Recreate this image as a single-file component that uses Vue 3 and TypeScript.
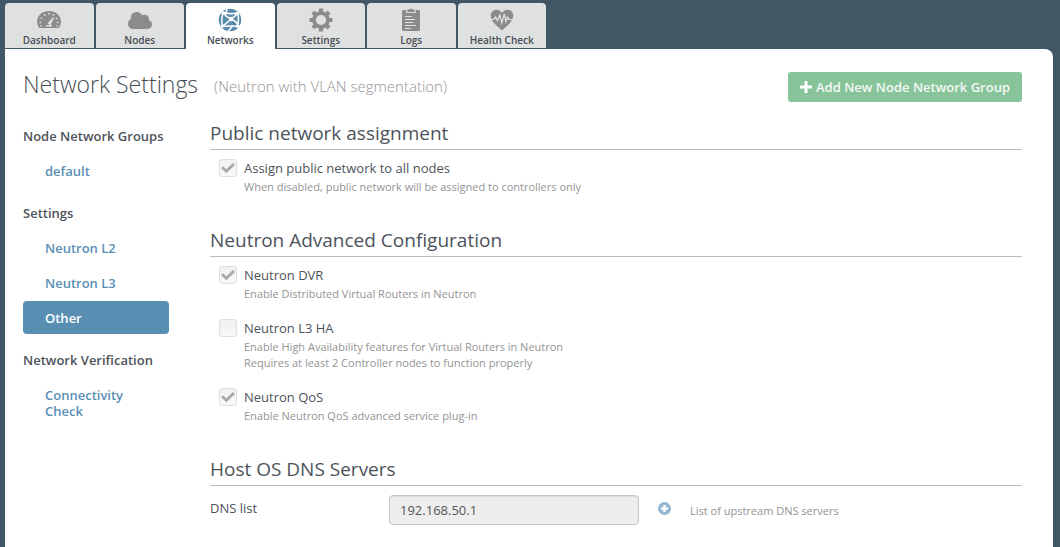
<script setup lang="ts">
import { ref } from 'vue'

interface Tab { id: string; label: string }
interface NavGroup { title: string; items: string[] }
interface Option { id: string; label: string; help: string[]; checked: boolean }
interface Section { title: string; options: Option[] }

const tabs: Tab[] = [
  { id: 'dashboard', label: 'Dashboard' },
  { id: 'nodes', label: 'Nodes' },
  { id: 'networks', label: 'Networks' },
  { id: 'settings', label: 'Settings' },
  { id: 'logs', label: 'Logs' },
  { id: 'health', label: 'Health Check' },
]
const activeTab = 'networks'

const navGroups: NavGroup[] = [
  { title: 'Node Network Groups', items: ['default'] },
  { title: 'Settings', items: ['Neutron L2', 'Neutron L3', 'Other'] },
  { title: 'Network Verification', items: ['Connectivity Check'] },
]
const activeItem = ref('Other')

const sections: Section[] = [
  {
    title: 'Public network assignment',
    options: [
      {
        id: 'assign-public',
        label: 'Assign public network to all nodes',
        help: ['When disabled, public network will be assigned to controllers only'],
        checked: true,
      },
    ],
  },
  {
    title: 'Neutron Advanced Configuration',
    options: [
      { id: 'dvr', label: 'Neutron DVR', help: ['Enable Distributed Virtual Routers in Neutron'], checked: true },
      {
        id: 'l3ha',
        label: 'Neutron L3 HA',
        help: [
          'Enable High Availability features for Virtual Routers in Neutron',
          'Requires at least 2 Controller nodes to function properly',
        ],
        checked: false,
      },
      { id: 'qos', label: 'Neutron QoS', help: ['Enable Neutron QoS advanced service plug-in'], checked: true },
    ],
  },
]
const dns = ref('192.168.50.1')
</script>

<template>
  <div class="page">
    <nav class="tabs">
      <a v-for="tab in tabs" :key="tab.id" href="#" class="tab" :class="{ active: tab.id === activeTab }">
        <svg v-if="tab.id === 'dashboard'" class="tab-icon" viewBox="0 0 24 24">
          <path class="fill" d="M2.2 20A12 11.6 0 0 1 0 14C0 7.600 5.4 3 12 3s12 4.600 12 11a12 11.600 0 0 1-2.200 6z" />
          <g class="cut">
            <circle cx="3.300" cy="14.400" r=".9" /><circle cx="4.500" cy="10.300" r=".9" />
            <circle cx="7.600" cy="7" r=".9" /><circle cx="12" cy="5.700" r=".9" />
            <circle cx="16.400" cy="7" r=".9" /><circle cx="19.500" cy="10.300" r=".9" />
            <circle cx="20.700" cy="14.400" r=".9" /><circle cx="3.900" cy="17.900" r=".8" /><circle cx="20.100" cy="17.900" r=".8" />
            <path d="M16.300 9l.9.600-3.700 7.600-3.200-1.800zM9 17h6v1.500H9z" />
          </g>
        </svg>
        <svg v-else-if="tab.id === 'nodes'" class="tab-icon" viewBox="0 0 24 24">
          <path class="fill" d="M5.500 21C2.200 21 0 18.900 0 16c0-2.400 1.200-4.100 3-4.900C1.900 6.900 5 4 8.600 4c2.600 0 4.600 1.300 5.400 3.300 3.800-1.900 7.700.5 7 4.900 1.900.7 3 2.200 3 4.200 0 2.700-2 4.600-4.800 4.600z" />
        </svg>
        <svg v-else-if="tab.id === 'networks'" class="tab-icon" viewBox="0 0 24 24">
          <circle class="fill" cx="12" cy="12" r="11.200" />
          <g class="wire">
            <path d="M5 4.500Q8 9 13 11T21.500 18.500M13 11Q17 9 19.500 5M13 11Q8 16 4 18.500M5 4.500Q12 6.500 19.500 5M5 4.500Q3 11 4 18.500M4 18.500Q12 17.500 21.500 18.500M19.500 5Q21.500 11 19.500 18M15 17.500L10 23.500M9 1L8 5" />
          </g>
          <g class="cut"><circle cx="13" cy="11" r="2.200" /><circle cx="5" cy="5" r="1.700" /><circle cx="19" cy="5.500" r="1.700" /><circle cx="4.500" cy="18" r="1.600" /><circle cx="19.500" cy="18" r="1.700" /></g>
        </svg>
        <svg v-else-if="tab.id === 'settings'" class="tab-icon" viewBox="0 0 24 24">
          <path class="fill" fill-rule="evenodd" d="M9.900 3.400V.6h4.200v2.800l2.500 1L18.500 2.500l3 3-1.900 1.900 1 2.500h2.800v4.200h-2.800l-1 2.500 1.900 1.900-3 3-1.900-1.900-2.500 1v2.800H9.900v-2.800l-2.500-1-1.900 1.900-3-3 1.900-1.900-1-2.500H.6V9.900h2.800l1-2.500-1.900-1.900 3-3 1.900 1.900zM12 6.900a5.100 5.100 0 1 0 0 10.200 5.100 5.100 0 0 0 0-10.200z" />
        </svg>
        <svg v-else-if="tab.id === 'logs'" class="tab-icon" viewBox="0 0 24 24">
          <path class="fill" d="M4.500 2h2.700v3h9.600V2h2.700a1.500 1.500 0 0 1 1.500 1.500v18a1.500 1.500 0 0 1-1.500 1.500h-15A1.500 1.500 0 0 1 3 21.500v-18A1.500 1.500 0 0 1 4.500 2zM8.300 1.600h1.900a1.900 1.300 0 0 1 3.600 0h1.900V4H8.300z" />
          <path class="cut" d="M6 8h7v1H6zM6 11h10v1H6zM6 14h8v1H6zM6 17h11v1H6zM6 20h6v1H6z" />
        </svg>
        <svg v-else class="tab-icon" viewBox="0 0 24 24">
          <path class="fill" d="M12 22.500C7.500 18 .8 14 .8 7.800.8 4.200 3.300 1.800 6.500 1.800c2.500 0 4.500 1.400 5.500 3.500 1-2.100 3-3.500 5.500-3.500 3.200 0 5.700 2.400 5.700 6C23.200 14 16.500 18 12 22.500z" />
          <path class="pulse" d="M.5 11.500h3.200L5.500 9l2 3.800L9.700 7l2.200 8 2.300-9 1.700 7.500L17.500 9l1.400 2.500h4.600" />
        </svg>
        <span>{{ tab.label }}</span>
      </a>
    </nav>

    <main class="panel">
      <header class="head">
        <h1>Network Settings</h1>
        <span class="subtitle">(Neutron with VLAN segmentation)</span>
        <button type="button" class="add" disabled>
          <svg viewBox="0 0 12 12"><path d="M4.500 0h3v4.500H12v3H7.500V12h-3V7.500H0v-3h4.500z" /></svg>
          Add New Node Network Group
        </button>
      </header>

      <div class="columns">
        <aside class="side">
          <section v-for="group in navGroups" :key="group.title" class="group">
            <h2>{{ group.title }}</h2>
            <ul>
              <li v-for="item in group.items" :key="item">
                <a href="#" :class="{ current: item === activeItem }" @click.prevent="activeItem = item">{{ item }}</a>
              </li>
            </ul>
          </section>
        </aside>

        <div class="content">
          <section v-for="section in sections" :key="section.title" class="section">
            <h3>{{ section.title }}</h3>
            <div v-for="option in section.options" :key="option.id" class="option">
              <input :id="option.id" v-model="option.checked" type="checkbox" disabled />
              <div>
                <label :for="option.id">{{ option.label }}</label>
                <p v-for="line in option.help" :key="line">{{ line }}</p>
              </div>
            </div>
          </section>

          <section class="section">
            <h3>Host OS DNS Servers</h3>
            <div class="dns">
              <label for="dns">DNS list</label>
              <input id="dns" v-model="dns" type="text" disabled />
              <button type="button" aria-label="Add DNS server" disabled>
                <svg viewBox="0 0 13 13"><circle cx="6.500" cy="6.500" r="6.500" /><path d="M5.300 3h2.400v2.300H10v2.400H7.700V10H5.300V7.700H3V5.300h2.300z" /></svg>
              </button>
              <p>List of upstream DNS servers</p>
            </div>
          </section>
        </div>
      </div>
    </main>
  </div>
</template>

<style>
body {
  margin: 0;
  background: #415766;
}
</style>

<style scoped>
.page {
  display: flex;
  flex-direction: column;
  box-sizing: border-box;
  height: 100vh;
  overflow: hidden;
  padding: 3px 7px 0 5px;
  background: #415766;
  color: #4d535b;
  font-family: "Open Sans", sans-serif;
  font-size: 13px;
}
h1, h2, h3, p, ul { margin: 0; padding: 0; }
ul { list-style: none; }
a { text-decoration: none; }

.tabs {
  display: flex;
  flex: none;
  gap: 2px;
  width: 541px;
  height: 46px;
}
.tab {
  display: flex;
  flex: 1 1 0;
  flex-direction: column;
  align-items: center;
  box-sizing: border-box;
  height: 45px;
  padding-top: 5px;
  border-radius: 4px 4px 0 0;
  background: #dfe1e0;
  color: #474d55;
  font-size: 10px;
  font-weight: 600;
  line-height: 16px;
}
.tab.active { height: 46px; background: #fff; }
.tab-icon { width: 24px; height: 24px; }
.fill { fill: #8b8b8b; }
.cut { fill: #dfe1e0; }
.pulse { fill: none; stroke: #dfe1e0; stroke-width: 1.2; }
.wire { fill: none; stroke: #fff; stroke-width: 1.5; }
.active .fill { fill: #5a8bab; }
.active .cut { fill: #fff; }

.panel {
  flex: 1 0 auto;
  padding: 0 31px 20px 18px;
  border-radius: 0 8px 0 0;
  background: #fff;
}
.head {
  display: flex;
  align-items: center;
  height: 71px;
}
h1 {
  padding-bottom: 2px;
  color: #474d55;
  font-size: 23px;
  font-weight: 300;
  line-height: 32px;
}
.subtitle {
  margin-left: 16px;
  padding-top: 3px;
  color: #949494;
  font-size: 15px;
  font-weight: 300;
}
.add {
  display: flex;
  align-items: center;
  gap: 4px;
  height: 30px;
  margin-top: 4px;
  margin-left: auto;
  padding: 0 12px;
  border: 0;
  border-radius: 3px;
  background: #88c49a;
  color: #f3f9f5;
  font: 600 13px "Open Sans", sans-serif;
}
.add svg { width: 12px; height: 12px; fill: #fff; }

.columns { display: flex; }
.side { width: 146px; margin: 6px 41px 0 0; flex: none; }
.group { margin-bottom: 16px; }
.group h2 {
  margin-bottom: 7px;
  font-size: 13px;
  font-weight: 600;
  line-height: 21px;
  white-space: nowrap;
}
.group ul { display: flex; flex-direction: column; gap: 2px; }
.group a {
  display: block;
  padding: 9px 22px 8px;
  border-radius: 4px;
  color: #5a8fb4;
  font-weight: 600;
  line-height: 16px;
}
.group a.current { background: #5a8fb4; color: #fff; }

.content { flex: 1; min-width: 0; }
.section { margin-bottom: 32px; }
h3 {
  margin-bottom: 8px;
  padding-bottom: 3px;
  border-bottom: 1px solid #bababa;
  font-size: 19px;
  font-weight: 400;
  line-height: 26px;
}
.option {
  display: flex;
  gap: 7px;
  padding-left: 9px;
}
.option + .option { margin-top: 16px; }
.option label { display: block; line-height: 21px; }
p { color: #949494; font-size: 11px; line-height: 16px; }
.option input {
  display: grid;
  place-items: center;
  flex: none;
  box-sizing: border-box;
  width: 18px;
  height: 18px;
  margin: 1px 0 0;
  border: 1px solid #dedede;
  border-radius: 3px;
  background: linear-gradient(#f1f1f1, #f8f8f8);
  appearance: none;
}
.option input:checked::before {
  width: 14px;
  height: 12px;
  background: #aaa;
  clip-path: polygon(0 53%, 14% 36%, 38% 60%, 85% 8%, 100% 24%, 38% 94%);
  content: "";
}
.dns { display: flex; align-items: flex-start; padding-top: 1px; }
.dns label { width: 179px; line-height: 26px; }
.dns input {
  box-sizing: border-box;
  width: 250px;
  height: 30px;
  padding: 0 10px;
  border: 1px solid #c6c6c6;
  border-radius: 4px;
  background: #eee;
  box-shadow: inset 0 1px 1px rgba(0, 0, 0, 0.08);
  color: #555;
  font: 13px "Open Sans", sans-serif;
}
.dns button {
  display: flex;
  margin: 7px 19px 0;
  padding: 0;
  border: 0;
  background: none;
}
.dns svg { width: 13px; height: 13px; fill: #93b7cf; }
.dns svg path { fill: #fff; }
.dns p { padding-top: 8px; }
</style>
